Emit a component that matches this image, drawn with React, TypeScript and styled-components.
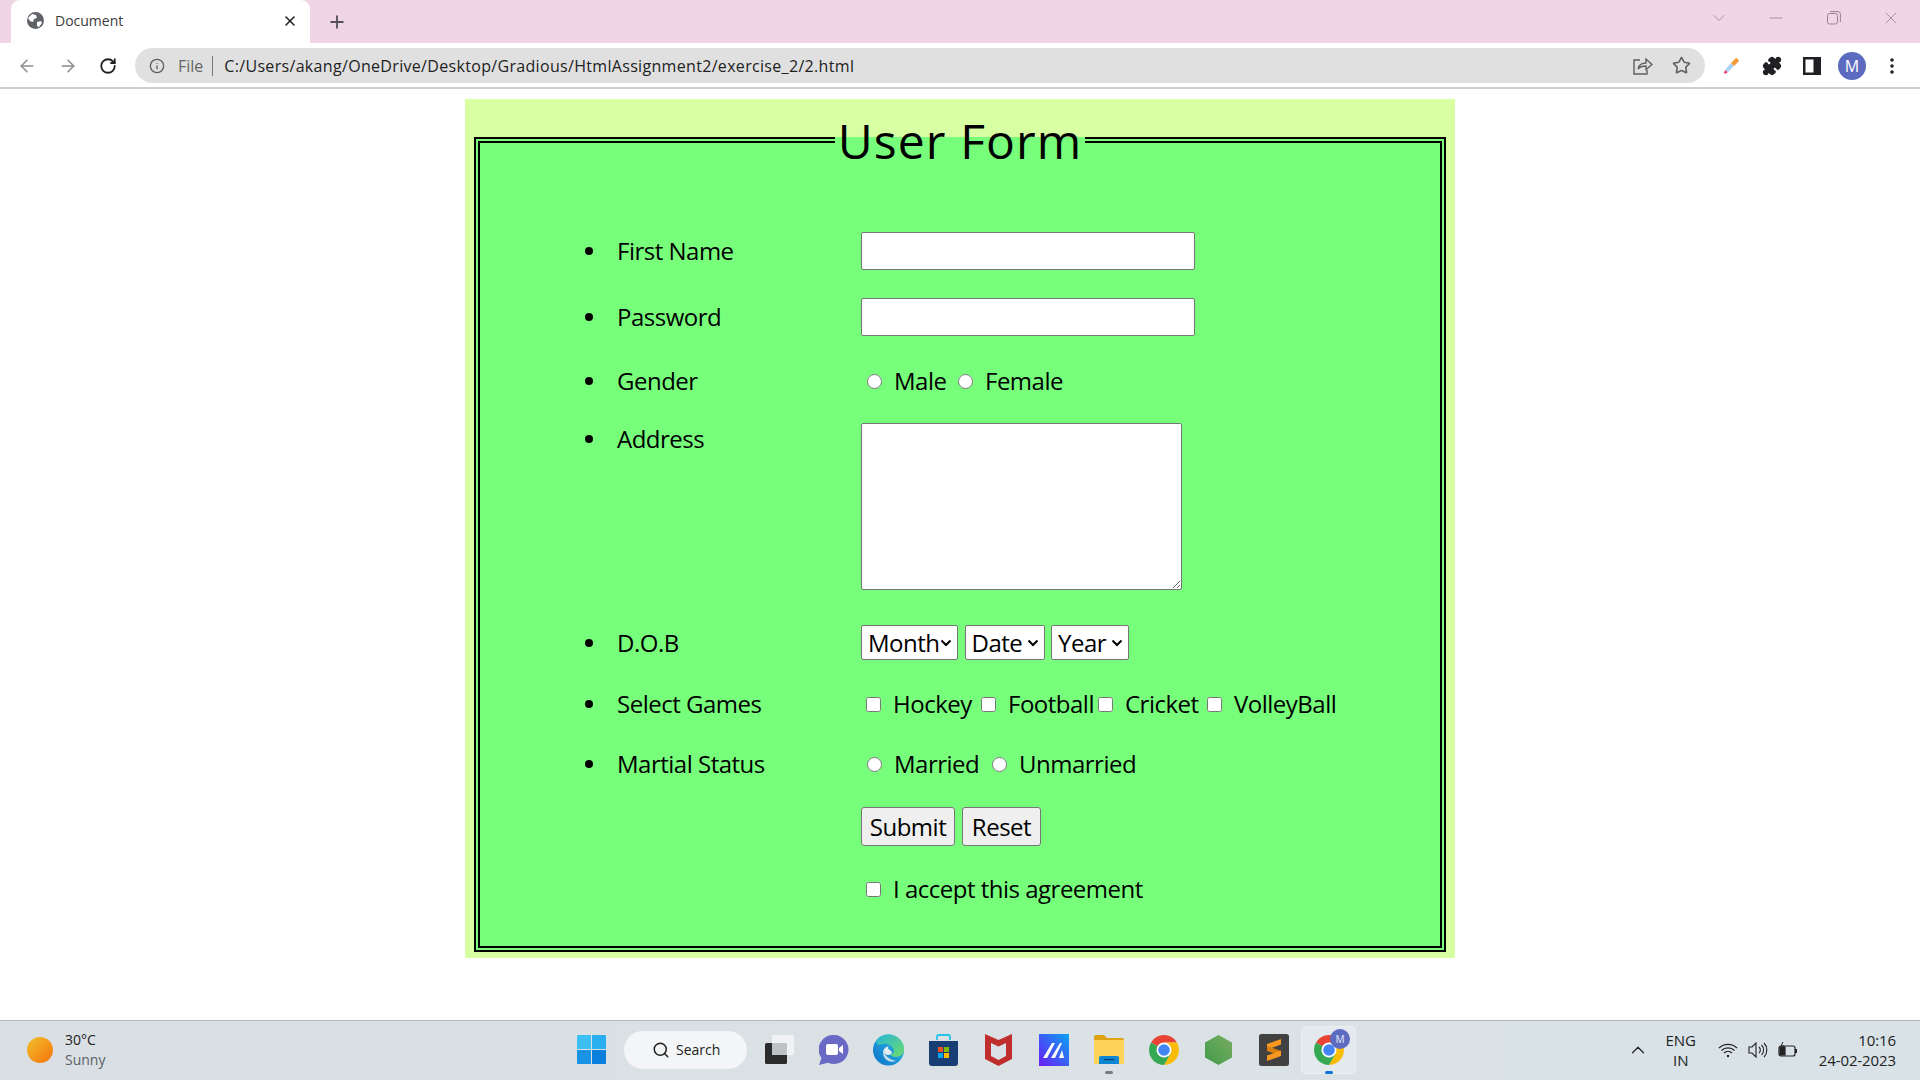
import React from "react";
import styled, { createGlobalStyle } from "styled-components";
import { ArrowLeft, ArrowRight, RotateCw, Info, Star, Puzzle, X, Plus, ChevronDown, Minus, ChevronUp, Search } from "lucide-react";

const FORM_FONT = `"Comic Sans MS", "Open Sans", "DejaVu Sans", sans-serif`;
const UI_FONT = `"Segoe UI", "Open Sans", "Noto Sans", sans-serif`;
const CHEVRON = `url("data:image/svg+xml,%3Csvg xmlns='http://www.w3.org/2000/svg' width='12' height='8' viewBox='0 0 12 8'%3E%3Cpath d='M1.500 1.500L6 6l4.500-4.500' fill='none' stroke='%23000' stroke-width='2'/%3E%3C/svg%3E")`;

const Global = createGlobalStyle`
  html, body { margin: 0; padding: 0; height: 100%; overflow: hidden; background: #fff; }
  #root { height: 100%; }
`;

const Screen = styled.div`
  height: 1080px; width: 1920px; display: flex; flex-direction: column; font-family: ${UI_FONT};
`;
const TabBar = styled.div`
  height: 43px; flex: none; background: #f0d6e4; display: flex; align-items: stretch; padding-left: 11px;
`;
const Tab = styled.div`
  width: 299px; background: #fff; border-radius: 9px 9px 0 0; display: flex; align-items: center; padding: 0 12px 2px 16px;
  box-sizing: border-box; color: #3a3a3a; font-size: 14px; gap: 11px;
`;
const TabTitle = styled.span` flex: 1; `;
const NewTab = styled.div`
  width: 54px; display: flex; align-items: center; justify-content: center; color: #55505a;
`;
const WindowControls = styled.div`
  margin-left: auto; display: flex; align-items: center; height: 36px; color: #9a8392;
`;
const WindowSlot = styled.span`
  width: 57.500px; display: flex; justify-content: center;
`;
const Toolbar = styled.div`
  height: 46px; flex: none; box-sizing: border-box; background: #fff; border-bottom: 2px solid #cfcfcf;
  display: flex; align-items: flex-start; padding: 5px 0 0 15px;
`;
const NavGroup = styled.div`
  display: flex; align-items: center; height: 35px; gap: 16.500px; width: 120px; flex: none;
`;
const NavIcon = styled.span<{ $on?: boolean }>`
  display: flex; width: 24px; justify-content: center; color: ${(p) => (p.$on ? "#222" : "#8c8c8c")};
`;
const Omnibox = styled.div`
  width: 1570px; height: 35px; flex: none; background: #e0e0e0; border-radius: 18px; display: flex; align-items: center;
  padding: 0 14px; box-sizing: border-box; font-size: 16px; color: #222;
`;
const FileTag = styled.span`
  color: #666; margin-left: 13px; padding-right: 9px; border-right: 1px solid #777; line-height: 20px; margin-right: 11px;
`;
const Url = styled.span` flex: 1; letter-spacing: 0.32px; `;
const OmniIcons = styled.div` display: flex; gap: 19px; align-items: center; color: #5f5f5f; margin-right: 0; `;
const ExtIcons = styled.div`
  display: flex; align-items: center; height: 35px; margin-left: 7px;
`;
const ExtSlot = styled.span`
  width: 40px; display: flex; justify-content: center; align-items: center;
`;
const Avatar = styled.div`
  width: 28px; height: 28px; border-radius: 50%; background: #5c6bc0; color: #fff; font-size: 16px;
  display: flex; align-items: center; justify-content: center;
`;

const Page = styled.main` flex: 1; display: flex; flex-direction: column; align-items: center; overflow: hidden; `;
const Panel = styled.div`
  width: 990px; box-sizing: border-box; margin-top: 10px; padding: 6px 9px 6px; background: #d9ffa3;
  font-family: ${FORM_FONT}; color: #000;
`;
const Fieldset = styled.fieldset`
  margin: 0; padding: 58px 0 39px; border: 6px double #000; background: #77ff7c; min-width: 0;
`;
const Legend = styled.legend`
  margin: 0 auto; padding: 2px 3px 0; font-size: 48px; line-height: 67px; letter-spacing: 1.100px;
`;
const Row = styled.div<{ $h: number; $top?: number; $start?: boolean }>`
  display: grid; grid-template-columns: 32px 244px 1fr; align-items: ${(p) => (p.$start ? "start" : "center")};
  height: ${(p) => p.$h}px; margin-top: ${(p) => p.$top ?? 0}px; margin-left: 105px; font-size: 24px; letter-spacing: -0.500px;
`;
const Bullet = styled.span`
  width: 8px; height: 8px; border-radius: 50%; background: #000;
`;
const BulletSlot = styled.span`
  display: flex; align-items: center; height: 32px;
`;
const Label = styled.label`
  line-height: 32px; white-space: nowrap;
`;
const Controls = styled.div<{ $gap?: number }>`
  display: flex; align-items: center; gap: ${(p) => p.$gap ?? 0}px;
`;
const TextInput = styled.input`
  width: 334px; height: 38px; box-sizing: border-box; border: 1px solid #767676; border-radius: 2px; background: #fff; padding: 0; margin: 0;
`;
const TextBox = styled.textarea`
  display: block; width: 321px; height: 167px; box-sizing: border-box; border: 1px solid #767676; border-radius: 2px; background: #fff; margin: 0; padding: 0;
`;
const Select = styled.select<{ $w: number }>`
  appearance: none; width: ${(p) => p.$w}px; height: 35px; box-sizing: border-box; font: 24px ${FORM_FONT}; letter-spacing: -0.500px; padding: 0 0 0 6px; margin: 0;
  background: #fff ${CHEVRON} no-repeat right 5px center; border: 1px solid #767676; border-radius: 2px; color: #000;
`;
const Option = styled.label<{ $w?: number }>`
  display: flex; align-items: center; flex: none; white-space: nowrap; line-height: 32px;
  margin-left: 5px; width: ${(p) => (p.$w ? `${p.$w - 5}px` : "auto")};
`;
const Tick = styled.input`
  width: 15px; height: 15px; margin: 0 12px 0 ${(p) => (p.type === "radio" ? "1px" : "0")}; flex: none;
`;
const Button = styled.button<{ $w: number }>`
  width: ${(p) => p.$w}px; height: 39px; box-sizing: border-box; font: 24px ${FORM_FONT}; letter-spacing: -0.500px; padding: 0;
  background: #efefef; border: 1px solid #767676; border-radius: 3px; color: #000;
`;

const Taskbar = styled.footer`
  height: 60px; flex: none; box-sizing: border-box; border-top: 1px solid #b4b7ba; background: linear-gradient(90deg, #d9dfe3, #dbe2e6 60%, #d8e2e7);
  display: flex; align-items: center; padding-bottom: 2px;
`;
const Weather = styled.div`
  width: 564px; flex: none; box-sizing: border-box; padding-left: 27px; display: flex; align-items: center; gap: 12px;
`;
const Sun = styled.div`
  width: 26px; height: 26px; border-radius: 50%; background: linear-gradient(135deg, #f2c12e, #f5720a);
`;
const WeatherText = styled.div`
  font-size: 14px; line-height: 20px; color: #222;
`;
const Muted = styled.div` color: #5c6167; `;
const TaskSlot = styled.div<{ $active?: boolean }>`
  width: 55px; height: 48px; flex: none; display: flex; align-items: center; justify-content: center; position: relative;
  border-radius: 5px; box-sizing: border-box;
  background: ${(p) => (p.$active ? "rgba(255,255,255,.25)" : "transparent")};
  box-shadow: ${(p) => (p.$active ? "inset 0 0 0 1px rgba(255,255,255,.35)" : "none")};
`;
const SearchPill = styled.div`
  width: 123px; height: 38px; flex: none; margin: 0 4px 0 5px; border-radius: 19px; background: #f3f5f6; color: #222;
  display: flex; align-items: center; box-sizing: border-box; padding-left: 28px; gap: 6px; font-size: 14px;
`;
const RunDot = styled.span<{ $active?: boolean }>`
  position: absolute; left: 50%; bottom: 0; transform: translateX(-50%); width: 8px; height: 3px; border-radius: 2px;
  background: ${(p) => (p.$active ? "#0a74d6" : "#777c80")};
`;
const Badge = styled.span`
  position: absolute; top: 3px; right: 6px; width: 20px; height: 20px; border-radius: 50%; background: #5c6bc0; color: #cfd3ee;
  font-size: 10px; display: flex; align-items: center; justify-content: center; font-weight: 600;
`;
const Tray = styled.div`
  margin-left: auto; display: flex; align-items: center; padding-right: 24px; color: #222; font-size: 15px;
`;
const Lang = styled.div` text-align: center; line-height: 20px; width: 40px; margin: 0 17px 0 12px; `;
const TrayIcons = styled.div` display: flex; align-items: center; gap: 10px; width: 80px; `;
const Clock = styled.div` text-align: right; line-height: 20px; margin-left: 21px; white-space: nowrap; letter-spacing: -0.1px; `;

const Globe = () => (
  <svg width="17" height="17" viewBox="0 0 17 17"><circle cx="8.500" cy="8.500" r="8.500" fill="#5f6368" /><path d="M5 2l4 1 1 3-3 1-1 3-3-1-2-3zM10 10l4-1 1 2-3 4-2-1z" fill="#fff" /></svg>
);
const Restore = () => (
  <svg width="14" height="14" viewBox="0 0 14 14" fill="none" stroke="currentColor"><rect x=".5" y="2.500" width="10" height="10.500" rx="2" /><path d="M3 .6h8a2.400 2.400 0 0 1 2.400 2.400v8" /></svg>
);
const Share = () => (
  <svg width="20" height="18" viewBox="0 0 20 18" fill="none" stroke="#5f5f5f" strokeWidth="1.400"><path d="M7 3H1v14h13v-4" /><path d="M5 12c1-5 5-6 8-6V2l6 5.500-6 5V9c-3 0-6 .5-8 3z" /></svg>
);
const Dropper = () => (
  <svg width="18" height="18" viewBox="0 0 18 18"><path d="M1 16l1-3 3 2-3 2z" fill="#ec3f6b" /><path d="M2 13l6-7 3 3-6 6z" fill="#a9d3f5" /><path d="M9 5l4-4 2 1 1 2-4 4-1 1-3-3z" fill="#f29a33" /></svg>
);
const SidePanel = () => (
  <svg width="18" height="18" viewBox="0 0 18 18"><path d="M0 0h18v18H0z" fill="#202124" /><path d="M2.500 2.500h8v13h-8z" fill="#fff" /></svg>
);
const Dots = () => (
  <svg width="4" height="16" viewBox="0 0 4 16" fill="#222"><circle cx="2" cy="2" r="1.800" /><circle cx="2" cy="8" r="1.800" /><circle cx="2" cy="14" r="1.800" /></svg>
);
const WinLogo = () => (
  <svg width="29" height="29" viewBox="0 0 29 29"><path d="M0 1a1 1 0 0 1 1-1h13v14H0z" fill="#3cc0f4" /><path d="M15 0h13a1 1 0 0 1 1 1v13H15z" fill="#29aef0" /><path d="M0 15h14v14H1a1 1 0 0 1-1-1z" fill="#1a93e4" /><path d="M15 15h14v13a1 1 0 0 1-1 1H15z" fill="#0a7fdc" /></svg>
);
const TaskView = () => (
  <svg width="30" height="30" viewBox="0 0 30 30"><rect x="1" y="8" width="22" height="21" rx="1.500" fill="#2b2b2b" /><rect x="8" y="0" width="22" height="20" rx="1" fill="#f4f5f6" opacity=".85" /><rect x="8" y="8" width="15" height="12" fill="#bfc2c4" /></svg>
);
const ChatIcon = () => (
  <svg width="30" height="32" viewBox="0 0 30 32"><path d="M15 1a14.500 14.500 0 1 1-6 27.700L0 31l2.500-7A14.500 14.500 0 0 1 15 1z" fill="#6b69c6" /><rect x="7" y="10" width="12" height="11" rx="2" fill="#fff" /><path d="M20 14l4-3v9l-4-3z" fill="#fff" /></svg>
);
const EdgeIcon = () => (
  <svg width="31" height="32" viewBox="0 0 31 32">
    <defs>
      <linearGradient id="eg1" x1="0" y1="1" x2="1" y2="0"><stop offset="0" stopColor="#0a6fc8" /><stop offset="1" stopColor="#2fc4e6" /></linearGradient>
      <linearGradient id="eg2" x1="0" y1="0" x2="1" y2="1"><stop offset="0" stopColor="#27b6d8" /><stop offset="1" stopColor="#6fdc6a" /></linearGradient>
    </defs>
    <circle cx="15.500" cy="16" r="15.500" fill="url(#eg1)" />
    <path d="M3 7C6 2 11 .5 15.500.5 24 .5 31 7 31 15c0 5-4 8-8 8-3 0-5-1-5.500-2.500 3-.5 4-3 3-5.500C19 11 14 9 10 10 6 11 4 12 3 7z" fill="url(#eg2)" />
    <path d="M17.500 20.500c-3 1.500-7.500-.5-6.500-5 .5-2 3-3.500 5.500-3-3 .5-1 3 1 4 2 1.200 1.500 3.300 0 4z" fill="#e4ecf0" />
    <path d="M23 27c-5 2-12 0-13-8 0-2 .5-3 1-4-1 6 5 10 12 12z" fill="#dbe5ea" opacity=".9" />
  </svg>
);
const StoreIcon = () => (
  <svg width="29" height="32" viewBox="0 0 29 32"><path d="M8 6V2.500A1.500 1.500 0 0 1 9.500 1h10A1.500 1.500 0 0 1 21 2.500V6" fill="none" stroke="#25c3e8" strokeWidth="1.800" /><path d="M0 7h29v22a3 3 0 0 1-3 3H3a3 3 0 0 1-3-3z" fill="#173f73" /><rect x="9" y="13" width="5" height="5" fill="#f25022" /><rect x="15" y="13" width="5" height="5" fill="#7fba00" /><rect x="9" y="19" width="5" height="5" fill="#00a4ef" /><rect x="15" y="19" width="5" height="5" fill="#ffb900" /></svg>
);
const McAfee = () => (
  <svg width="27" height="32" viewBox="0 0 27 32"><path fillRule="evenodd" d="M0 0l13.500 6L27 0v25l-13.500 7L0 25zM6 9v13l7.500 4 7.500-4V9l-7.500 3.500z" fill="#c02d2d" /></svg>
);
const MaIcon = () => (
  <svg width="30" height="32" viewBox="0 0 30 32">
    <defs><linearGradient id="mg" x1="0" y1="1" x2="1" y2="0"><stop offset="0" stopColor="#6a1cf5" /><stop offset="1" stopColor="#0aa3f5" /></linearGradient></defs>
    <rect width="30" height="32" fill="url(#mg)" />
    <path d="M4 24L13 9h3L8 24zM12 24L21 9h2L16 24z" fill="#fff" /><path d="M20 24l3-8 2 8z" fill="#fff" />
  </svg>
);
const FolderIcon = () => (
  <svg width="30" height="29" viewBox="0 0 30 29"><path d="M0 2a2 2 0 0 1 2-2h8l3 3h15a2 2 0 0 1 2 2v6H0z" fill="#dfa30f" /><path d="M0 5h30v24H0z" fill="#fdd459" /><path d="M5 29v-6a2 2 0 0 1 2-2h16a2 2 0 0 1 2 2v6z" fill="#0f86d3" /><rect x="10" y="24" width="10" height="1.200" fill="#0b3f6b" /></svg>
);
const ChromeIcon = () => (
  <svg width="30" height="30" viewBox="2 2 44 44">
    <path d="M24 2A22 22 0 0 1 43.050 13H24a11 11 0 0 0-9.530 5.500L4.950 13A22 22 0 0 1 24 2z" fill="#e94335" />
    <path d="M43.050 13A22 22 0 0 1 24 46l9.530-16.500A11 11 0 0 0 24 13z" fill="#fbbc05" />
    <path d="M24 46A22 22 0 0 1 4.950 13l9.520 5.500a11 11 0 0 0 19.060 11z" fill="#34a853" />
    <circle cx="24" cy="24" r="10.500" fill="#fff" /><circle cx="24" cy="24" r="8.500" fill="#4285f4" />
  </svg>
);
const NodeIcon = () => (
  <svg width="27" height="30" viewBox="0 0 27 30"><defs><linearGradient id="ng" x1="0" y1="1" x2="1" y2="0"><stop offset="0" stopColor="#3f9b48" /><stop offset="1" stopColor="#7cad63" /></linearGradient></defs><path d="M13.500 0L27 7.500v15L13.500 30 0 22.500v-15z" fill="url(#ng)" /></svg>
);
const Sublime = () => (
  <svg width="30" height="32" viewBox="0 0 30 32"><rect width="30" height="32" rx="2.500" fill="#414141" /><path d="M22 5v5.500L8 15.500V10z" fill="#f89820" /><path d="M8 12l14 5v5L8 17z" fill="#d9800f" /><path d="M22 16.500V22L8 27v-5.500z" fill="#f89820" /></svg>
);
const Wifi = () => (
  <svg width="20" height="16" viewBox="0 0 20 16" fill="none" stroke="#222" strokeWidth="1.200"><path d="M1 6a13 13 0 0 1 18 0M3.500 8.500a9.500 9.500 0 0 1 13 0M6 11a6 6 0 0 1 8 0" /><circle cx="10" cy="14" r="1.200" fill="#222" stroke="none" /></svg>
);
const Volume = () => (
  <svg width="20" height="16" viewBox="0 0 20 16" fill="none" stroke="#222" strokeWidth="1.100"><path d="M1 5h3l4-4v14l-4-4H1z" /><path d="M11 5a4 4 0 0 1 0 6M13.500 3a7 7 0 0 1 0 10M16 1a10 10 0 0 1 0 14" /></svg>
);
const Battery = () => (
  <svg width="20" height="16" viewBox="0 0 20 16" fill="none" stroke="#222" strokeWidth="1.200"><rect x="1" y="4" width="16" height="10" rx="2" /><path d="M18 7v4" strokeWidth="2" /><path d="M2 5h5v8H2z" fill="#222" /><path d="M5 0L3 4h3l-2 4" strokeWidth="1" /></svg>
);

const taskIcons = [<TaskView />, <ChatIcon />, <EdgeIcon />, <StoreIcon />, <McAfee />, <MaIcon />];

export default function App() {
  return (
    <Screen>
      <Global />
      <TabBar>
        <Tab>
          <Globe />
          <TabTitle>Document</TabTitle>
          <X size={16} color="#222" strokeWidth={2.400} />
        </Tab>
        <NewTab><Plus size={20} strokeWidth={2.200} /></NewTab>
        <WindowControls>
          <WindowSlot><ChevronDown size={20} strokeWidth={1} /></WindowSlot>
          <WindowSlot><Minus size={20} strokeWidth={1} /></WindowSlot>
          <WindowSlot><Restore /></WindowSlot>
          <WindowSlot><X size={20} strokeWidth={1} /></WindowSlot>
        </WindowControls>
      </TabBar>
      <Toolbar>
        <NavGroup>
          <NavIcon><ArrowLeft size={20} strokeWidth={1.800} /></NavIcon>
          <NavIcon><ArrowRight size={20} strokeWidth={1.800} /></NavIcon>
          <NavIcon $on><RotateCw size={18} strokeWidth={2.400} /></NavIcon>
        </NavGroup>
        <Omnibox>
          <Info size={16} color="#5f5f5f" strokeWidth={2} />
          <FileTag>File</FileTag>
          <Url>C:/Users/akang/OneDrive/Desktop/Gradious/HtmlAssignment2/exercise_2/2.html</Url>
          <OmniIcons>
            <Share />
            <Star size={19} strokeWidth={2} />
          </OmniIcons>
        </Omnibox>
        <ExtIcons>
          <ExtSlot><Dropper /></ExtSlot>
          <ExtSlot><Puzzle size={20} color="#202124" fill="#202124" /></ExtSlot>
          <ExtSlot><SidePanel /></ExtSlot>
          <ExtSlot><Avatar>M</Avatar></ExtSlot>
          <ExtSlot><Dots /></ExtSlot>
        </ExtIcons>
      </Toolbar>
      <Page>
        <Panel>
          <Fieldset>
            <Legend>User Form</Legend>
            <Row $h={38}>
              <Bullet />
              <Label>First Name</Label>
              <TextInput type="text" />
            </Row>
            <Row $h={38} $top={28}>
              <Bullet />
              <Label>Password</Label>
              <TextInput type="password" />
            </Row>
            <Row $h={38} $top={26}>
              <Bullet />
              <Label>Gender</Label>
              <Controls>
                <Option $w={91}><Tick type="radio" name="g" />Male</Option>
                <Option><Tick type="radio" name="g" />Female</Option>
              </Controls>
            </Row>
            <Row $h={167} $top={23} $start>
              <BulletSlot><Bullet /></BulletSlot>
              <Label>Address</Label>
              <TextBox />
            </Row>
            <Row $h={35} $top={35}>
              <Bullet />
              <Label>D.O.B</Label>
              <Controls $gap={6.500}>
                <Select $w={97}><option>Month</option></Select>
                <Select $w={80}><option>Date</option></Select>
                <Select $w={78}><option>Year</option></Select>
              </Controls>
            </Row>
            <Row $h={36} $top={26}>
              <Bullet />
              <Label>Select Games</Label>
              <Controls>
                <Option $w={115}><Tick type="checkbox" />Hockey</Option>
                <Option $w={117}><Tick type="checkbox" />Football</Option>
                <Option $w={109}><Tick type="checkbox" />Cricket</Option>
                <Option><Tick type="checkbox" />VolleyBall</Option>
              </Controls>
            </Row>
            <Row $h={36} $top={24}>
              <Bullet />
              <Label>Martial Status</Label>
              <Controls>
                <Option $w={125}><Tick type="radio" name="m" />Married</Option>
                <Option><Tick type="radio" name="m" />Unmarried</Option>
              </Controls>
            </Row>
            <Row $h={39} $top={25}>
              <span />
              <span />
              <Controls $gap={7}>
                <Button $w={94}>Submit</Button>
                <Button $w={79}>Reset</Button>
              </Controls>
            </Row>
            <Row $h={36} $top={25}>
              <span />
              <span />
              <Controls>
                <Option><Tick type="checkbox" />I accept this agreement</Option>
              </Controls>
            </Row>
          </Fieldset>
        </Panel>
      </Page>
      <Taskbar>
        <Weather>
          <Sun />
          <WeatherText>
            <div>30°C</div>
            <Muted>Sunny</Muted>
          </WeatherText>
        </Weather>
        <TaskSlot><WinLogo /></TaskSlot>
        <SearchPill><Search size={18} strokeWidth={2} />Search</SearchPill>
        {taskIcons.map((icon, i) => <TaskSlot key={i}>{icon}</TaskSlot>)}
        <TaskSlot><FolderIcon /><RunDot /></TaskSlot>
        <TaskSlot><ChromeIcon /></TaskSlot>
        <TaskSlot><NodeIcon /></TaskSlot>
        <TaskSlot><Sublime /></TaskSlot>
        <TaskSlot $active><ChromeIcon /><Badge>M</Badge><RunDot $active /></TaskSlot>
        <Tray>
          <ChevronUp size={22} strokeWidth={1.300} />
          <Lang>ENG<br />IN</Lang>
          <TrayIcons><Wifi /><Volume /><Battery /></TrayIcons>
          <Clock>10:16<br />24-02-2023</Clock>
        </Tray>
      </Taskbar>
    </Screen>
  );
}
